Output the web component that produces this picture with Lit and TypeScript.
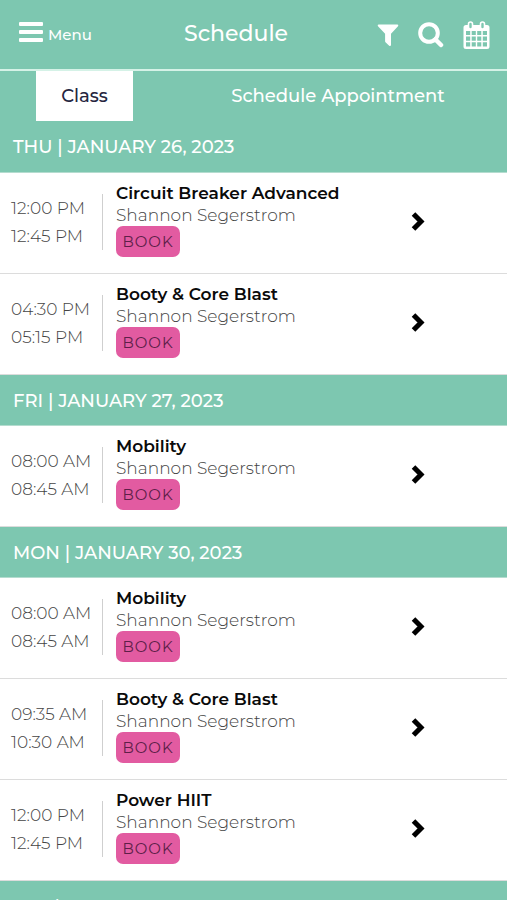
import { LitElement, html, css } from "lit";
import { customElement, property, state } from "lit/decorators.js";
import { classMap } from "lit/directives/class-map.js";

interface Session {
  start: string;
  end: string;
  name: string;
  coach: string;
}

interface Day {
  label: string;
  sessions: Session[];
}

const coach = "Shannon Segerstrom";

const days: Day[] = [
  {
    label: "THU | JANUARY 26, 2023",
    sessions: [
      { start: "12:00 PM", end: "12:45 PM", name: "Circuit Breaker Advanced", coach },
      { start: "04:30 PM", end: "05:15 PM", name: "Booty & Core Blast", coach },
    ],
  },
  {
    label: "FRI | JANUARY 27, 2023",
    sessions: [{ start: "08:00 AM", end: "08:45 AM", name: "Mobility", coach }],
  },
  {
    label: "MON | JANUARY 30, 2023",
    sessions: [
      { start: "08:00 AM", end: "08:45 AM", name: "Mobility", coach },
      { start: "09:35 AM", end: "10:30 AM", name: "Booty & Core Blast", coach },
      { start: "12:00 PM", end: "12:45 PM", name: "Power HIIT", coach },
    ],
  },
  { label: "TUE | JANUARY 31, 2023", sessions: [] },
];

@customElement("session-row")
export class SessionRow extends LitElement {
  @property({ attribute: false }) session!: Session;

  static styles = css`
    :host {
      display: grid;
      grid-template-columns: 103px minmax(0, 1fr) 180px;
      align-items: center;
      box-sizing: border-box;
      height: 101px;
      padding-bottom: 2px;
      border-bottom: 1px solid #dcdcdc;
      background: #fff;
    }
    .times {
      box-sizing: border-box;
      height: 56px;
      padding-left: 11px;
      border-right: 1px solid #cfcfcf;
      color: #444;
      font-size: 17px;
      font-weight: 300;
      line-height: 28px;
      white-space: nowrap;
    }
    .details {
      display: flex;
      flex-direction: column;
      align-items: flex-start;
      padding: 0 0 6px 13px;
      white-space: nowrap;
    }
    .name {
      margin: 0;
      color: #0a0a0a;
      font-size: 17px;
      font-weight: 600;
      line-height: 22px;
    }
    .coach {
      color: #444;
      font-size: 17px;
      font-weight: 300;
      line-height: 22px;
    }
    .book {
      width: 64px;
      height: 31px;
      margin: 0;
      padding: 0;
      border: 0;
      border-radius: 7px;
      background: #e25ba1;
      color: #5e1f49;
      font: inherit;
      font-size: 15px;
      font-weight: 400;
      letter-spacing: 1px;
    }
    .open {
      display: flex;
      justify-self: start;
      margin: 0;
      padding: 0;
      border: 0;
      background: none;
      color: #000;
    }
  `;

  render() {
    const s = this.session;
    return html`
      <div class="times">
        <div>${s.start}</div>
        <div>${s.end}</div>
      </div>
      <div class="details">
        <h3 class="name">${s.name}</h3>
        <div class="coach">${s.coach}</div>
        <button class="book">BOOK</button>
      </div>
      <button class="open" aria-label="Open ${s.name}">
        <svg width="180" height="20" viewBox="0 0 180 20" aria-hidden="true">
          <path d="M86.500 2l7.500 7.500-7.500 7.500" fill="none" stroke="currentColor" stroke-width="5" />
        </svg>
      </button>
    `;
  }
}

@customElement("app-root")
export class AppRoot extends LitElement {
  @state() private tab = "Class";

  static styles = css`
    :host {
      display: flex;
      flex-direction: column;
      height: 100vh;
      overflow: hidden;
      background: #fff;
      font-family: Montserrat, Inter, "Open Sans", sans-serif;
    }
    button {
      margin: 0;
      padding: 0;
      border: 0;
      background: none;
      color: inherit;
      font: inherit;
    }
    .bar {
      display: grid;
      flex: none;
      grid-template-columns: 1fr auto 1fr;
      align-items: center;
      box-sizing: border-box;
      height: 71px;
      padding: 0 17px 0 18px;
      border-bottom: 2px solid #d5f2e7;
      background: #7dc7b0;
      color: #fff;
    }
    .menu {
      display: flex;
      align-items: center;
      justify-self: start;
      gap: 5px;
      font-size: 15px;
      font-weight: 500;
    }
    .menu svg {
      padding-bottom: 5px;
    }
    .title {
      margin: 0;
      padding: 0 36px 2px 0;
      font-size: 22px;
      font-weight: 500;
    }
    .tools {
      display: flex;
      align-items: center;
      justify-self: end;
      gap: 18px;
    }
    .tools button,
    .menu svg {
      display: flex;
    }
    .tabs {
      display: flex;
      flex: none;
      height: 50px;
      padding-left: 36px;
      background: #7dc7b0;
    }
    .tab {
      flex: 1;
      padding-left: 36px;
      color: #fff;
      font-size: 18px;
      font-weight: 500;
      white-space: nowrap;
    }
    .tab.first {
      flex: none;
      width: 97px;
      padding: 0;
    }
    .tab.selected {
      background: #fff;
      color: #26263f;
    }
    .list {
      flex: 1;
      min-height: 0;
      overflow-y: auto;
      scrollbar-width: none;
    }
    .day {
      box-sizing: border-box;
      height: 51px;
      margin: 0;
      padding-left: 13px;
      border-bottom: 1px solid #b4dccf;
      background: #7dc7b0;
      color: #fff;
      font-size: 18px;
      font-weight: 500;
      line-height: 52px;
    }
    .day:first-of-type {
      height: 52px;
    }
  `;

  render() {
    return html`
      <header class="bar">
        <button class="menu">
          <svg width="25" height="20" viewBox="0 0 25 20" fill="currentColor" aria-hidden="true">
            <rect x="1" width="24" height="4" rx="1" />
            <rect x="1" y="8" width="24" height="4" rx="1" />
            <rect x="1" y="16" width="24" height="4" rx="1" />
          </svg>
          <span>Menu</span>
        </button>
        <h1 class="title">Schedule</h1>
        <div class="tools">
          <button aria-label="Filter">
            <svg width="23" height="24" viewBox="0 0 23 24" fill="currentColor" aria-hidden="true">
              <path d="M1.600 1.500H20.400Q22 1.700 21 3.200L14 10.700V22Q13.700 23.600 12.200 22.700L8.500 19.200Q8.100 18.800 8.100 18.200V10.700L1 3.200Q0 1.700 1.600 1.500Z" />
            </svg>
          </button>
          <button aria-label="Search">
            <svg width="27" height="27" viewBox="0 0 27 27" fill="none" stroke="currentColor" aria-hidden="true">
              <circle cx="11" cy="12" r="8.800" stroke-width="4" />
              <path d="M17.500 18.500l5.500 5.500" stroke-width="4.500" stroke-linecap="round" />
            </svg>
          </button>
          <button aria-label="Calendar">
            <svg width="27" height="28" viewBox="0 0 27 28" aria-hidden="true">
              <path
                fill="currentColor"
                fill-rule="evenodd"
                d="M3 4H24Q26.500 4 26.500 6.500V25.500Q26.500 28 24 28H3Q.5 28 .5 25.500V6.500Q.5 4 3 4ZM3 10V14H7.200V10ZM8.700 10V14H12.800V10ZM14.200 10V14H18.300V10ZM19.800 10V14H24V10ZM3 15.500V19.700H7.200V15.500ZM8.700 15.500V19.700H12.800V15.500ZM14.200 15.500V19.700H18.300V15.500ZM19.800 15.500V19.700H24V15.500ZM3 21.200V25.500H7.200V21.200ZM8.700 21.200V25.500H12.800V21.200ZM14.200 21.200V25.500H18.300V21.200ZM19.800 21.200V25.500H24V21.200Z"
              />
              <g fill="#7dc7b0" stroke="currentColor" stroke-width="1.600">
                <rect x="5.500" y="1" width="4" height="7" rx="2" />
                <rect x="17.500" y="1" width="4" height="7" rx="2" />
              </g>
            </svg>
          </button>
        </div>
      </header>
      <nav class="tabs">
        ${["Class", "Schedule Appointment"].map(
          (name, i) => html`
            <button
              class=${classMap({ tab: true, first: i === 0, selected: this.tab === name })}
              @click=${() => (this.tab = name)}
            >
              ${name}
            </button>
          `,
        )}
      </nav>
      <main class="list">
        ${days.map(
          (day) => html`
            <h2 class="day">${day.label}</h2>
            ${day.sessions.map((s) => html`<session-row .session=${s}></session-row>`)}
          `,
        )}
      </main>
    `;
  }
}
